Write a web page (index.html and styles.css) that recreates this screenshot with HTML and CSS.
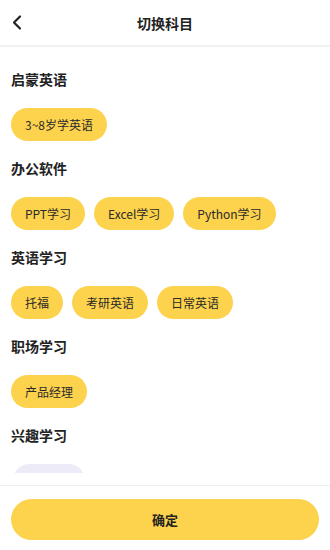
FILE: index.html
```html
<!DOCTYPE html>
<html lang="zh">
<head>
<meta charset="utf-8">
<link rel="stylesheet" href="styles.css">
</head>
<body>
<div class="page">
  <header class="header">
    <svg class="back" width="24" height="24" viewBox="0 0 24 24"><polyline points="16,5.5 10,11.5 16,17.5" fill="none" stroke="#222" stroke-width="2.2" stroke-linecap="round" stroke-linejoin="round"/></svg>
    <div class="title">切换科目</div>
  </header>
  <main class="content">
    <section class="section">
      <h2 class="sec-title">启蒙英语</h2>
      <div class="chips"><span class="chip">3~8岁学英语</span></div>
    </section>
    <section class="section">
      <h2 class="sec-title">办公软件</h2>
      <div class="chips"><span class="chip">PPT学习</span><span class="chip">Excel学习</span><span class="chip">Python学习</span></div>
    </section>
    <section class="section">
      <h2 class="sec-title">英语学习</h2>
      <div class="chips"><span class="chip">托福</span><span class="chip">考研英语</span><span class="chip">日常英语</span></div>
    </section>
    <section class="section">
      <h2 class="sec-title">职场学习</h2>
      <div class="chips"><span class="chip">产品经理</span></div>
    </section>
    <section class="section">
      <h2 class="sec-title">兴趣学习</h2>
      <div class="chips"><span class="chip chip-ghost"></span></div>
    </section>
  </main>
  <div class="spacer"></div>
  <footer class="footer">
    <button class="confirm">确定</button>
  </footer>
</div>
</body>
</html>
```
FILE: styles.css
```css
html, body {
  margin: 0;
  padding: 0;
  background: #fff;
}
body {
  font-family: "Noto Sans CJK SC", "Noto Sans", sans-serif;
  color: #222;
}
.page {
  width: 330px;
  height: 550px;
  display: flex;
  flex-direction: column;
  overflow: hidden;
}
.header {
  position: relative;
  height: 45px;
  flex: none;
  display: flex;
  align-items: center;
  justify-content: center;
  border-bottom: 2px solid #f1f1f1;
}
.back {
  position: absolute;
  left: 4px;
  top: 11px;
}
.title {
  font-size: 14px;
  font-weight: 700;
  color: #222;
}
.content {
  height: 426px;
  flex: none;
  overflow: hidden;
  padding: 22px 11px 0;
  box-sizing: border-box;
}
.section {
  margin-bottom: 17px;
}
.sec-title {
  margin: 0 0 19px;
  font-size: 14px;
  line-height: 20px;
  font-weight: 700;
  color: #222;
}
.chips {
  display: flex;
  flex-wrap: wrap;
  gap: 9px;
}
.chip {
  height: 33px;
  line-height: 33px;
  padding: 0 14px;
  border-radius: 17px;
  background: #fdd24c;
  font-size: 12px;
  color: #2a2a2a;
  white-space: nowrap;
}
.chip-ghost {
  width: 72px;
  padding: 0;
  margin-left: 2px;
  background: #ecebf7;
}
.spacer {
  height: 12px;
  flex: none;
}
.footer {
  flex: 1;
  border-top: 1px solid #efefef;
  padding: 13px 11px 0;
}
.confirm {
  display: block;
  width: 100%;
  height: 41px;
  border: none;
  border-radius: 21px;
  background: #fdd24c;
  font-family: inherit;
  font-size: 13px;
  font-weight: 700;
  color: #222;
  padding: 0;
}
```
